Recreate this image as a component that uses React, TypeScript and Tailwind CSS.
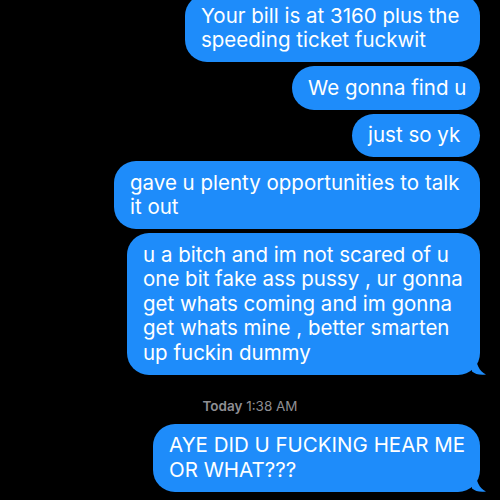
import React from "react";

const messages = [
  { w: "w-[295px]", lines: ["Your bill is at 3160 plus the", "speeding ticket fuckwit"] },
  { w: "w-[188px]", lines: ["We gonna find u"] },
  { w: "w-[128px]", lines: ["just so yk"] },
  { w: "w-[366px]", lines: ["gave u plenty opportunities to talk", "it out"] },
  {
    w: "w-[353px]",
    tail: true,
    lines: [
      "u a bitch and im not scared of u",
      "one bit fake ass pussy , ur gonna",
      "get whats coming and im gonna",
      "get whats mine , better smarten",
      "up fuckin dummy",
    ],
  },
];

function Tail() {
  return (
    <svg className="absolute bottom-0 right-[-6px]" width="16" height="20" viewBox="0 0 16 20">
      <path d="M0 0 L6 0 C6 9 9 16 16 19.5 C10 20.5 5 19 2 16.5 Z" fill="#1e8cfa" />
    </svg>
  );
}

function Bubble({ w, lines, tail }: { w: string; lines: string[]; tail?: boolean }) {
  return (
    <div className={`relative ml-auto ${w} rounded-[22px] bg-[#1e8cfa] py-[9.5px] pl-4 text-[20.5px] leading-[24.5px] text-white`}>
      {lines.map((l, i) => (
        <div key={i} className="whitespace-nowrap">
          {l}
        </div>
      ))}
      {tail && <Tail />}
    </div>
  );
}

export default function App() {
  return (
    <div className="h-[500px] w-[500px] overflow-hidden bg-black font-['Inter',sans-serif]">
      <div className="mt-[-6px] flex flex-col gap-[4px] pr-5">
        {messages.map((m, i) => (
          <Bubble key={i} {...m} />
        ))}
        <div className="-mr-5 mt-[17px] mb-[4px] text-center text-[13.5px] text-[#8e8e93]">
          <span className="font-semibold">Today</span> 1:38 AM
        </div>
        <Bubble w="w-[327px]" tail lines={["AYE DID U FUCKING HEAR ME", "OR WHAT???"]} />
      </div>
    </div>
  );
}
